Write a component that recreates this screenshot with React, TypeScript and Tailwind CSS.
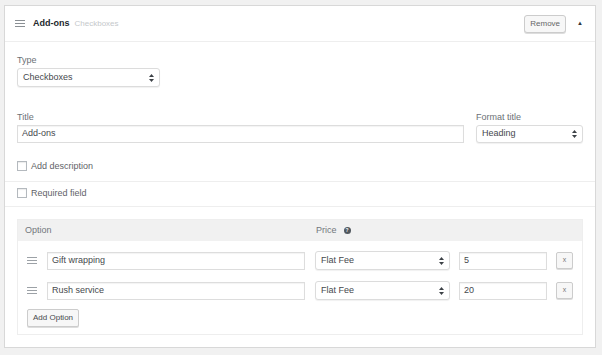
import React from "react";

const font = { fontFamily: '"Liberation Sans", Arial, sans-serif' };

function Handle({ className = "" }: { className?: string }) {
  return (
    <svg width="10" height="7" viewBox="0 0 10 7" className={className}>
      <rect x="0" y="0" width="10" height="1" fill="currentColor" />
      <rect x="0" y="3" width="10" height="1" fill="currentColor" />
      <rect x="0" y="6" width="10" height="1" fill="currentColor" />
    </svg>
  );
}

function Arrows() {
  return (
    <svg width="5" height="8" viewBox="0 0 5 8" className="text-[#3c4146]">
      <path d="M2.5 0 L5 3 L0 3 Z" fill="currentColor" />
      <path d="M2.5 8 L5 5 L0 5 Z" fill="currentColor" />
    </svg>
  );
}

function Select({ value, className = "" }: { value: string; className?: string }) {
  return (
    <div
      className={`flex items-center justify-between rounded-[3px] border border-[#dcdcdc] bg-white pl-[5px] pr-[5px] text-[9px] text-[#46494d] shadow-[0_1px_1px_rgba(0,0,0,0.06)] ${className}`}
    >
      <span>{value}</span>
      <Arrows />
    </div>
  );
}

function Input({ value, className = "" }: { value: string; className?: string }) {
  return (
    <div
      className={`flex items-center border border-[#dddddd] bg-white pl-[4px] text-[9px] text-[#46494d] shadow-[inset_0_1px_1px_rgba(0,0,0,0.05)] ${className}`}
    >
      {value}
    </div>
  );
}

function Checkbox({ label }: { label: string }) {
  return (
    <label className="flex h-[12px] items-center gap-[4px] text-[9px] leading-[12px] text-[#5f6368]">
      <span className="h-[10px] w-[10px] border border-[#b4b9be] bg-white shadow-[inset_0_1px_1px_rgba(0,0,0,0.08)]" />
      {label}
    </label>
  );
}

const rows = [
  { name: "Gift wrapping", price: "5" },
  { name: "Rush service", price: "20" },
];

export default function App() {
  return (
    <div className="h-[355px] w-[602px] bg-[#f1f1f1] pl-[4px] pt-[5px]" style={font}>
      <div className="flex h-[343px] w-[592px] flex-col border border-[#d8d8d8] bg-white">
        {/* header */}
        <div className="flex h-[36px] shrink-0 items-center border-b border-[#eeeeee] pl-[10px] pr-[12px]">
          <Handle className="text-[#8a8f94]" />
          <span className="ml-[8px] text-[9px] font-bold text-[#23282d]">Add-ons</span>
          <span className="ml-[5px] text-[8px] text-[#c5c8cb]">Checkboxes</span>
          <button className="ml-auto h-[18px] rounded-[3px] border border-[#cccccc] bg-[#f7f7f7] px-[5px] text-[8px] text-[#666666] shadow-[0_1px_0_#dddddd]">
            Remove
          </button>
          <span className="ml-[11px] text-[6px] text-[#32373c]">▲</span>
        </div>

        {/* type + title */}
        <div className="px-[12px] pt-[12px]">
          <div className="text-[9px] leading-[12px] text-[#6c7176]">Type</div>
          <Select value="Checkboxes" className="mt-[2px] h-[19px] w-[143px]" />

          <div className="mt-[24px] flex gap-[12px]">
            <div className="flex-1">
              <div className="text-[9px] leading-[12px] text-[#6c7176]">Title</div>
              <Input value="Add-ons" className="mt-[2px] h-[18px] w-[447px]" />
            </div>
            <div className="w-[107px]">
              <div className="text-[9px] leading-[12px] text-[#6c7176]">Format title</div>
              <Select value="Heading" className="mt-[2px] h-[18px] w-[107px]" />
            </div>
          </div>

          <div className="mt-[17px] pb-[9px]">
            <Checkbox label="Add description" />
          </div>
        </div>

        <div className="border-t border-[#eeeeee] px-[12px] pb-[7px] pt-[5px]">
          <Checkbox label="Required field" />
        </div>

        <div className="border-t border-[#eeeeee] px-[12px] pt-[12px]">
          <div className="h-[116px] w-[566px] border border-[#eeeeee]">
            <div className="flex h-[21px] items-center bg-[#f1f1f1] pl-[7px] text-[9px] text-[#72777c]">
              <span className="w-[291px]">Option</span>
              <span>Price</span>
              <span className="ml-[7px] flex h-[7px] w-[7px] items-center justify-center rounded-full bg-[#50575e] text-[5px] font-bold text-white">
                ?
              </span>
            </div>
            <div className="flex flex-col gap-[11px] pl-[9px] pt-[10px]">
              {rows.map((r) => (
                <div key={r.name} className="flex items-center">
                  <Handle className="text-[#9ca1a6]" />
                  <Input value={r.name} className="ml-[10px] h-[18px] w-[258px]" />
                  <Select value="Flat Fee" className="ml-[10px] h-[19px] w-[135px]" />
                  <Input value={r.price} className="ml-[9px] h-[18px] w-[88px]" />
                  <button className="ml-[9px] flex h-[17px] w-[17px] items-center justify-center rounded-[2px] border border-[#cccccc] bg-[#f7f7f7] pb-[1px] text-[7px] text-[#777777] shadow-[0_1px_0_#dddddd]">
                    x
                  </button>
                </div>
              ))}
            </div>
            <div className="flex pl-[9px] pt-[9px]">
              <button className="h-[18px] rounded-[2px] border border-[#cccccc] bg-[#f7f7f7] px-[5px] text-[8px] text-[#46494d] shadow-[0_1px_0_#dddddd]">
                Add Option
              </button>
            </div>
          </div>
        </div>
      </div>
    </div>
  );
}
